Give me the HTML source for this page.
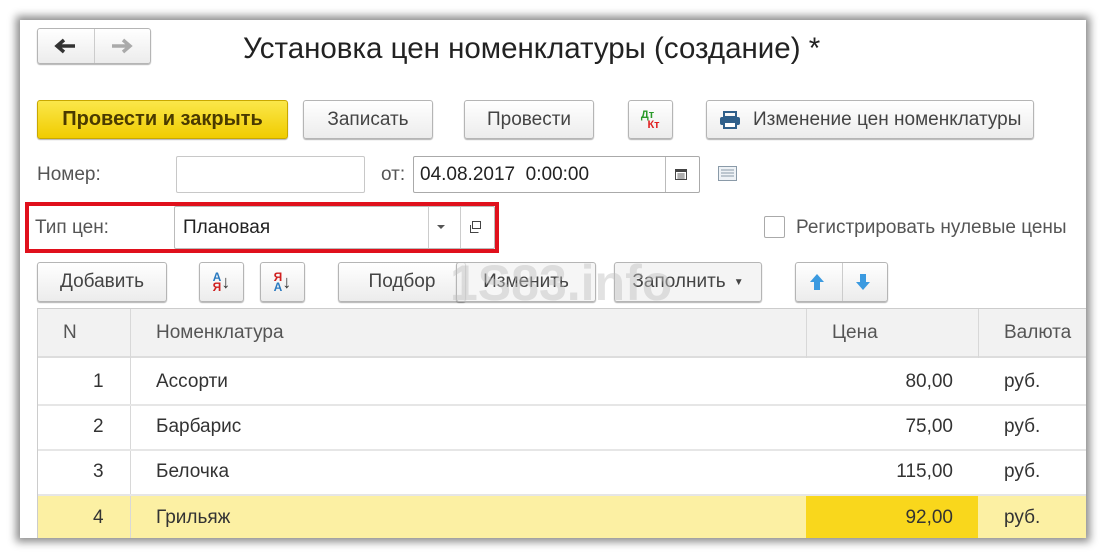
<!DOCTYPE html>
<html><head><meta charset="utf-8"><style>
*{margin:0;padding:0;box-sizing:border-box}
body{width:1105px;height:557px;background:#fff;font-family:"Liberation Sans",sans-serif;position:relative;overflow:hidden;color:#333}
.win{position:absolute;left:20px;top:20px;width:1066px;height:518px;background:#fff;box-shadow:0 0 8px 4px rgba(0,0,0,.45);overflow:hidden}
.a{position:absolute}
.btn{position:absolute;border:1px solid #b5b5b5;border-radius:3px;background:linear-gradient(#fff,#ececec);box-shadow:0 1px 1px rgba(0,0,0,.3);font-size:19px;color:#444;display:flex;align-items:center;justify-content:center;transform-origin:left}
.t{position:absolute;white-space:nowrap}
.inp{position:absolute;border:1px solid #c8c8c8;border-radius:2px;background:#fff}
.cell{position:absolute;font-size:19px;color:#333;white-space:nowrap}
</style></head><body>
<div class="win">
<div class="btn" style="left:17px;top:8px;width:114px;height:36px;font-size:22px;justify-content:flex-start">
<svg class="a" style="left:16px;top:9px" width="22" height="16" viewBox="0 0 22 16"><path d="M21 8H5M10 2L3 8l7 6" fill="none" stroke="#333" stroke-width="3.5"/></svg>
<div class="a" style="left:56px;top:0;width:1px;height:34px;background:#ccc"></div>
<svg class="a" style="left:73px;top:9px" width="22" height="16" viewBox="0 0 22 16"><path d="M1 8h16M12 2l7 6-7 6" fill="none" stroke="#aaa" stroke-width="3.5"/></svg></div>
<div class="t" style="left:223px;top:12px;font-size:29.5px;color:#222">Установка цен номенклатуры (создание) *</div>

<div class="btn" style="left:17px;top:80px;width:251px;height:39px;background:linear-gradient(#fbe74a,#f0cc00);border-color:#c9a800;font-weight:bold;color:#4a3a00;font-size:20px">Провести и закрыть</div>
<div class="btn" style="left:283px;top:80px;width:130px;height:39px">Записать</div>
<div class="btn" style="left:444px;top:80px;width:130px;height:39px">Провести</div>
<div class="btn" style="left:608px;top:80px;width:45px;height:39px;font-size:11px;font-weight:bold;line-height:10px;flex-direction:column"><span style="color:#2a9a2a;margin-left:-6px">Дт</span><span style="color:#e02020;margin-left:6px">Кт</span></div>
<div class="btn" style="left:686px;top:80px;width:328px;height:39px;justify-content:flex-start;padding-left:12px">
<svg width="22" height="18" viewBox="0 0 22 18"><rect x="5" y="1" width="12" height="5" fill="none" stroke="#2f5f8a" stroke-width="2"/><rect x="1" y="6" width="20" height="8" rx="2" fill="#2f5f8a"/><rect x="5" y="11" width="12" height="6" fill="#fff" stroke="#2f5f8a" stroke-width="2"/></svg>
<span style="margin-left:12px">Изменение цен номенклатуры</span></div>

<div class="t" style="left:17px;top:144px;font-size:19px;color:#555">Номер:</div>
<div class="inp" style="left:156px;top:136px;width:189px;height:37px"></div>
<div class="t" style="left:361px;top:144px;font-size:19px;color:#555">от:</div>
<div class="inp" style="left:393px;top:136px;width:287px;height:37px;border-color:#aaa"><span style="position:absolute;left:6px;top:7px;font-size:19px;color:#222">04.08.2017&nbsp; 0:00:00</span>
<div class="a" style="left:251px;top:0;width:1px;height:35px;background:#bbb"></div>
<svg class="a" style="left:261px;top:11px" width="12" height="12" viewBox="0 0 12 12"><rect x="0.5" y="1.5" width="11" height="10" fill="#fff" stroke="#444"/><rect x="0" y="1" width="12" height="3" fill="#444"/><path d="M2 6h8M2 8h8M2 10h8M4 5v6M6 5v6M8 5v6" stroke="#777" stroke-width=".7"/></svg></div>
<svg class="a" style="left:698px;top:146px" width="20" height="16" viewBox="0 0 20 16"><rect x="0.5" y="0.5" width="18" height="14" fill="#eef2f6" stroke="#8a9aa8"/><path d="M3 4h13M3 7h13M3 10h13" stroke="#8a9aa8"/></svg>

<div class="a" style="left:5px;top:182px;width:474px;height:51px;border:4px solid #e0101c"></div>
<div class="t" style="left:15px;top:197px;font-size:19px;color:#555">Тип цен:</div>
<div class="inp" style="left:154px;top:186px;width:321px;height:43px;border-color:#bbb"><span style="position:absolute;left:8px;top:10px;font-size:19px;color:#222">Плановая</span>
<div class="a" style="left:253px;top:0;width:1px;height:41px;background:#ccc"></div>
<div class="a" style="left:262px;top:18px;border-left:4px solid transparent;border-right:4px solid transparent;border-top:4px solid #555"></div>
<div class="a" style="left:285px;top:0;width:1px;height:41px;background:#ccc"></div>
<svg class="a" style="left:293px;top:13px" width="14" height="14" viewBox="0 0 14 14"><rect x="4.5" y="1.5" width="8" height="7" fill="none" stroke="#444"/><path d="M2.5 5v7.5h8" fill="none" stroke="#444"/></svg></div>

<div class="a" style="left:744px;top:196px;width:21px;height:22px;border:1px solid #aaa;border-radius:2px;background:#fff"></div>
<div class="t" style="left:776px;top:197px;font-size:19px;color:#555">Регистрировать нулевые цены</div>

<div class="btn" style="left:17px;top:242px;width:130px;height:40px">Добавить</div>
<div class="btn" style="left:179px;top:242px;width:45px;height:40px;font-size:12px;font-weight:bold;line-height:10px"><span style="display:flex;flex-direction:column"><span style="color:#2a7ac0">А</span><span style="color:#d02020">Я</span></span><span style="font-size:18px;color:#333">&#x2193;</span></div>
<div class="btn" style="left:240px;top:242px;width:45px;height:40px;font-size:12px;font-weight:bold;line-height:10px"><span style="display:flex;flex-direction:column"><span style="color:#d02020">Я</span><span style="color:#2a7ac0">А</span></span><span style="font-size:18px;color:#333">&#x2193;</span></div>
<div class="btn" style="left:318px;top:242px;width:128px;height:40px">Подбор</div>
<div class="btn" style="left:436px;top:242px;width:140px;height:40px;background:rgba(240,240,240,.6)">Изменить</div>
<div class="btn" style="left:594px;top:242px;width:148px;height:40px;background:rgba(240,240,240,.7)">Заполнить <span style="font-size:10px;margin-left:8px">&#x25BC;</span></div>
<div class="t" style="left:430px;top:234px;font-size:50px;font-weight:bold;color:rgba(190,190,190,.45)">1S83.info</div>
<div class="btn" style="left:775px;top:242px;width:93px;height:40px">
<svg class="a" style="left:12px;top:10px" width="18" height="18" viewBox="0 0 18 18"><path d="M9 1L2 9h4v8h6V9h4z" fill="#3b9ae0"/></svg>
<div class="a" style="left:46px;top:0;width:1px;height:38px;background:#ccc"></div>
<svg class="a" style="left:58px;top:10px" width="18" height="18" viewBox="0 0 18 18"><path d="M9 17L2 9h4V1h6v8h4z" fill="#3b9ae0"/></svg></div>

<div class="a" style="left:17px;top:288px;width:1049px;height:230px;border:1px solid #ccc;border-right:none;border-bottom:none">
<div class="a" style="left:0;top:0;width:1049px;height:49px;background:#f2f2f2;border-bottom:2px solid #ddd"></div>
<div class="a" style="left:92px;top:0;width:1px;height:230px;background:#d8d8d8"></div>
<div class="a" style="left:768px;top:0;width:1px;height:49px;background:#d8d8d8"></div>
<div class="a" style="left:940px;top:0;width:1px;height:49px;background:#d8d8d8"></div>
<div class="a" style="left:0;top:95px;width:1049px;height:2px;background:#e6e6e6"></div>
<div class="a" style="left:0;top:140px;width:1049px;height:2px;background:#e6e6e6"></div>
<div class="a" style="left:0;top:185px;width:1049px;height:2px;background:#e6e6e6"></div>
<div class="a" style="left:0;top:187px;width:1049px;height:43px;background:#fcf0a3"></div>
<div class="a" style="left:92px;top:187px;width:1px;height:43px;background:#d8d8d8"></div>
<div class="a" style="left:768px;top:187px;width:172px;height:43px;background:#f9d71c"></div>
<div class="cell" style="left:25px;top:13px;color:#555">N</div>
<div class="cell" style="left:118px;top:13px;color:#555">Номенклатура</div>
<div class="cell" style="left:794px;top:13px;color:#555">Цена</div>
<div class="cell" style="left:966px;top:13px;color:#555">Валюта</div>
<div class="cell" style="left:55px;top:62px">1</div><div class="cell" style="left:118px;top:62px">Ассорти</div><div class="cell" style="right:133px;top:62px">80,00</div><div class="cell" style="left:966px;top:62px">руб.</div>
<div class="cell" style="left:55px;top:107px">2</div><div class="cell" style="left:118px;top:107px">Барбарис</div><div class="cell" style="right:133px;top:107px">75,00</div><div class="cell" style="left:966px;top:107px">руб.</div>
<div class="cell" style="left:55px;top:152px">3</div><div class="cell" style="left:118px;top:152px">Белочка</div><div class="cell" style="right:133px;top:152px">115,00</div><div class="cell" style="left:966px;top:152px">руб.</div>
<div class="cell" style="left:55px;top:198px">4</div><div class="cell" style="left:118px;top:198px">Грильяж</div><div class="cell" style="right:133px;top:198px">92,00</div><div class="cell" style="left:966px;top:198px">руб.</div>
</div>
</div>
</body></html>
